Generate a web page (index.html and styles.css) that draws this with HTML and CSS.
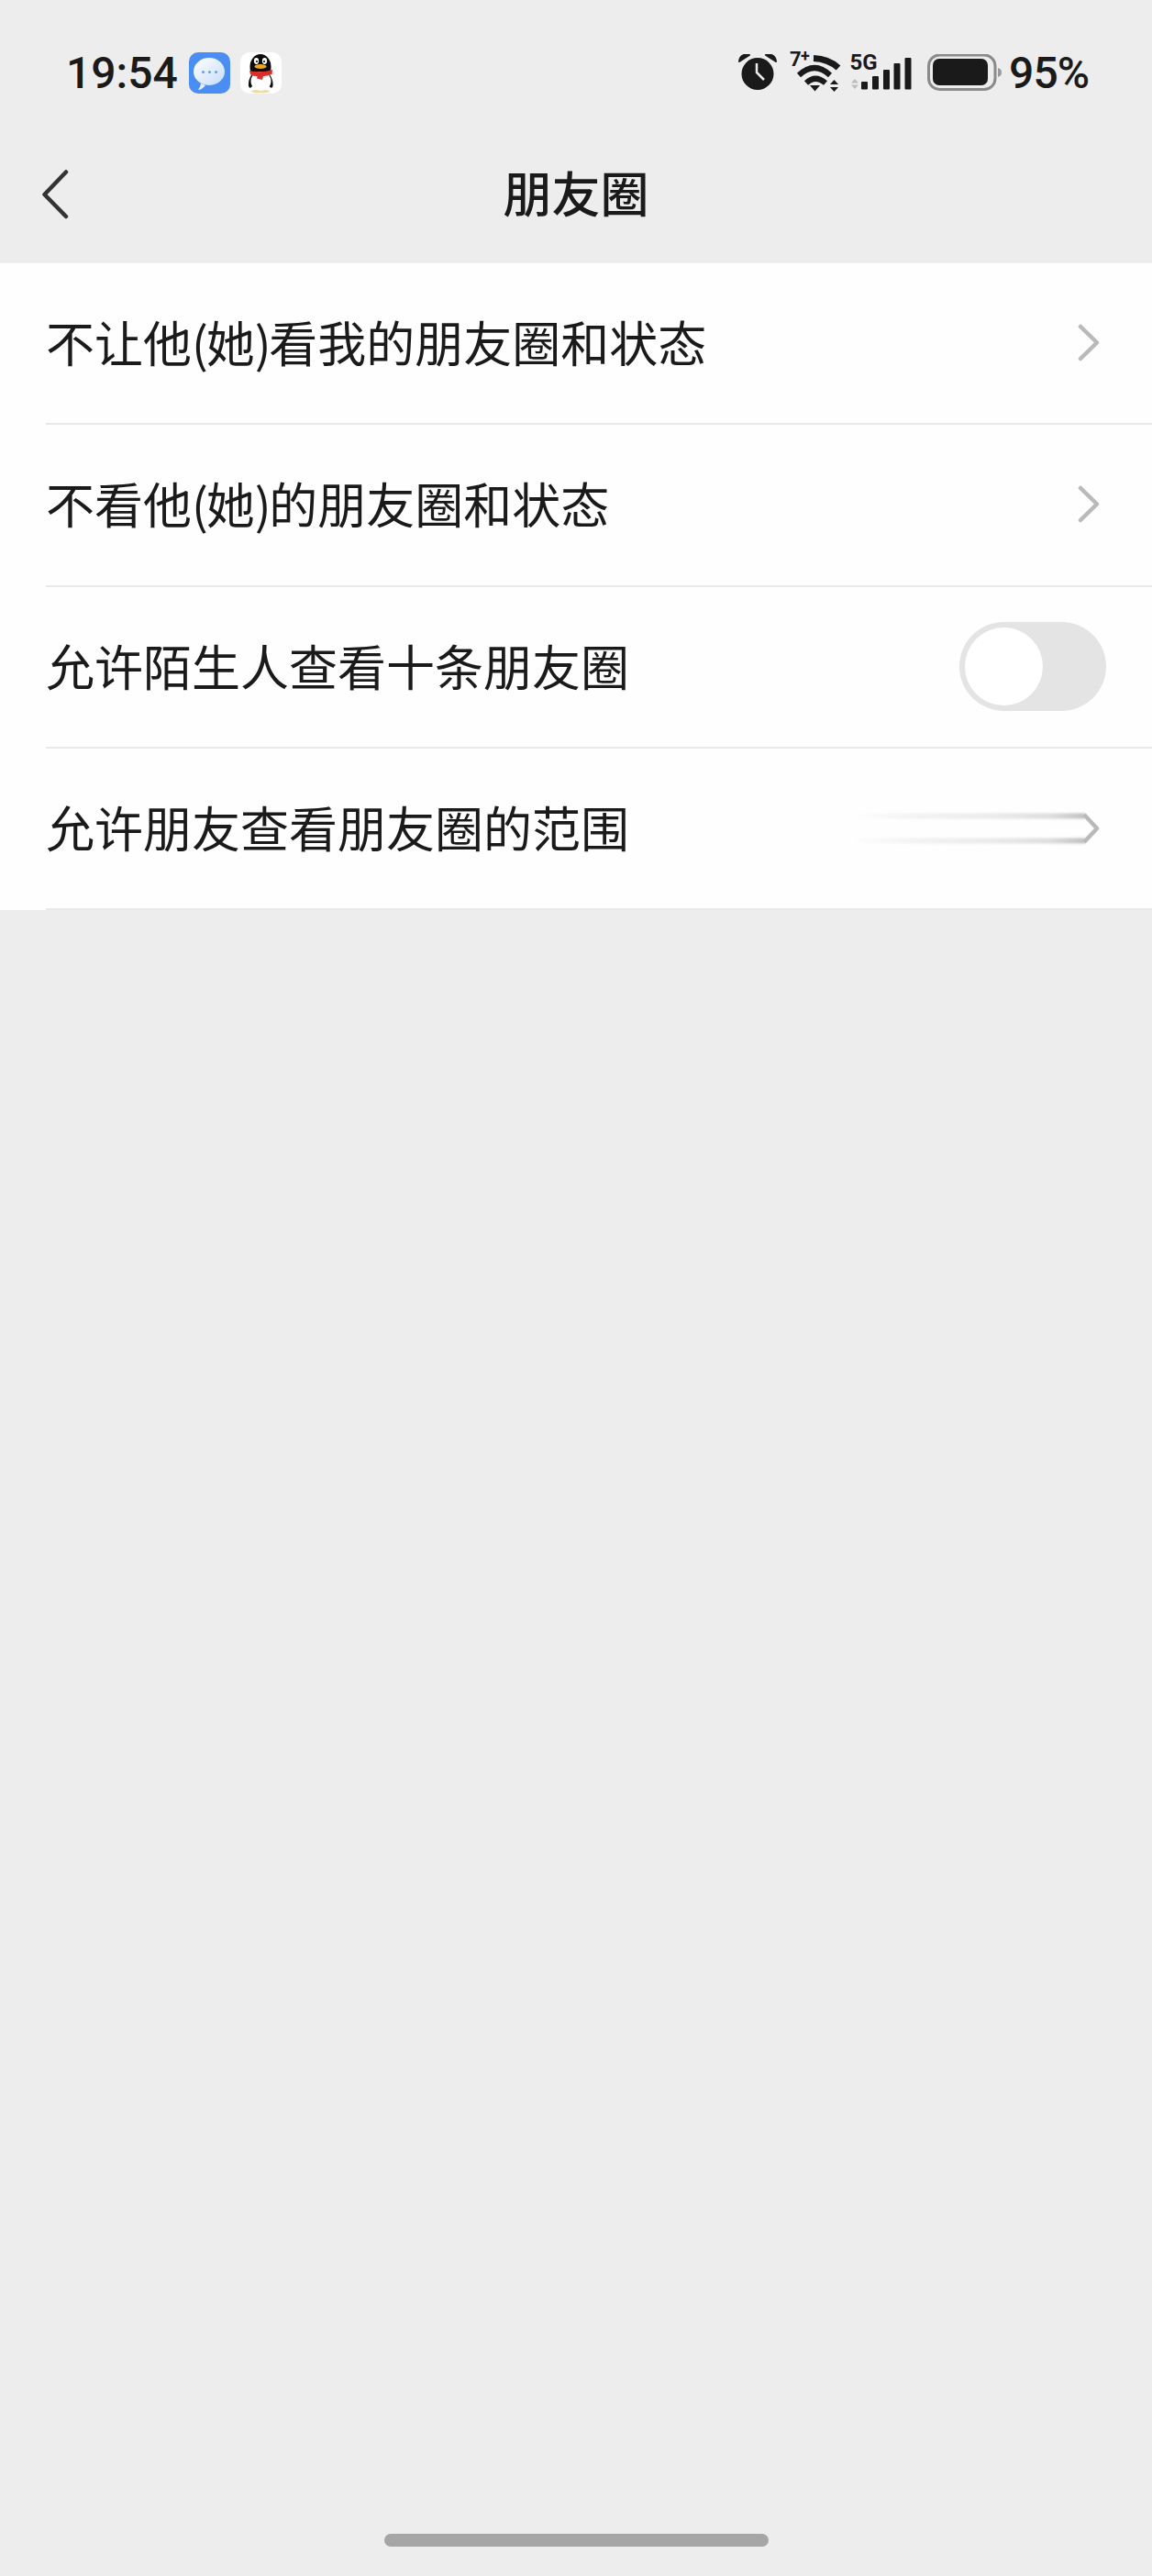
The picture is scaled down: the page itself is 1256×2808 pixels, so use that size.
FILE: index.html
```html
<!DOCTYPE html>
<html lang="zh-CN">
	<head>
		<title>朋友圈</title>
		<meta charset="utf-8">
		<link rel="stylesheet" href="styles.css">
	</head>
	<body>
		<div id="status">
			<div class="status-left">
				<span class="time">19:54</span>
				<svg class="app-icon" width="45" height="45" viewBox="206 57 45 45">
					<defs>
						<linearGradient id="bubble" x1="0" y1="0" x2="1" y2="1">
							<stop offset="0" stop-color="#ffffff"/>
							<stop offset="1" stop-color="#c6dcfa"/>
						</linearGradient>
					</defs>
					<rect x="206" y="57" width="45" height="45" rx="10" fill="#4b8ef3"/>
					<path d="M216 98 Q219 94 219 91 L224 93 Q220 98 216 98 Z" fill="#e6f0fd"/>
					<ellipse cx="228" cy="78" rx="17" ry="15" fill="url(#bubble)"/>
					<circle cx="221.5" cy="78.5" r="1.6" fill="#6fa1e8"/>
					<circle cx="228.5" cy="78.5" r="1.6" fill="#6fa1e8"/>
					<circle cx="235.5" cy="78.5" r="1.6" fill="#6fa1e8"/>
				</svg>
				<svg class="app-icon" width="45" height="45" viewBox="262 57 45 45">
					<rect x="262" y="57" width="45" height="45" rx="10" fill="#ffffff"/>
					<ellipse cx="284" cy="99.500" rx="10" ry="1.800" fill="#eed9a0"/>
					<ellipse cx="284" cy="73" rx="11.500" ry="14" fill="#0c0c0c"/>
					<ellipse cx="274.500" cy="88" rx="3" ry="8" fill="#0c0c0c" transform="rotate(16 274.500 88)"/>
					<ellipse cx="294" cy="88" rx="3" ry="8" fill="#0c0c0c" transform="rotate(-16 294 88)"/>
					<ellipse cx="284.500" cy="88.500" rx="11" ry="10.500" fill="#ffffff"/>
					<path d="M272 77 Q284 80 297 76 L296.500 81 Q291 83 287 83 L286 87 L280 85.500 L280.500 83 Q275 83 273 81 Z" fill="#dd2d2a"/>
					<ellipse cx="279.500" cy="66.500" rx="2.600" ry="3.400" fill="#ffffff"/>
					<ellipse cx="288.500" cy="66.500" rx="2.600" ry="3.400" fill="#ffffff"/>
					<circle cx="280" cy="67" r="1.100" fill="#0c0c0c"/>
					<circle cx="288" cy="67" r="1.100" fill="#0c0c0c"/>
					<ellipse cx="284" cy="72.500" rx="6.500" ry="2.400" fill="#eba921"/>
				</svg>
			</div>
			<div class="status-right">
				<svg width="42" height="42" viewBox="807 59 42 42">
					<circle cx="828" cy="80.5" r="17.5" fill="#1a1a1a"/>
					<path d="M808 67 Q809 58 819 60 Z" fill="#1a1a1a" stroke="#1a1a1a" stroke-width="2" stroke-linejoin="round"/>
					<path d="M848 67 Q847 58 837 60 Z" fill="#1a1a1a" stroke="#1a1a1a" stroke-width="2" stroke-linejoin="round"/>
					<path d="M827 69 V79 L835 87" fill="none" stroke="#ededed" stroke-width="2.5"/>
				</svg>
				<svg class="icon-wifi" width="60" height="60" viewBox="862 50 60 60">
					<text x="863" y="72" class="net-text">7</text>
					<text x="875" y="67" class="net-plus">+</text>
					<g fill="none" stroke="#1a1a1a">
						<path d="M889 63.500 Q905 64 916 74" stroke-width="7"/>
						<path d="M873 82 Q890 66 907 82" stroke-width="6"/>
						<path d="M881 90.500 Q891 81 902 90.500" stroke-width="6"/>
					</g>
					<polygon points="885,93 896,93 890.5,99.5" fill="#1a1a1a"/>
					<polygon points="911.5,87 907,92 916,92" fill="#1a1a1a"/>
					<polygon points="907,95 916,95 911.5,100" fill="#1a1a1a"/>
				</svg>
				<svg class="icon-signal" width="68" height="60" viewBox="929 50 68 60">
					<text x="928.500" y="75.500" class="net-text net-5g">5G</text>
					<polygon points="934,86 930,90.5 938,90.5" fill="#bdbdbd"/>
					<polygon points="930,92.5 938,92.5 934,97" fill="#bdbdbd"/>
					<rect x="941" y="89" width="7" height="8.5" rx="1" fill="#1a1a1a"/>
					<rect x="953" y="83" width="7" height="14.5" rx="1" fill="#1a1a1a"/>
					<rect x="965" y="76" width="7" height="21.5" rx="1" fill="#1a1a1a"/>
					<rect x="976.5" y="69" width="7" height="28.5" rx="1" fill="#1a1a1a"/>
					<rect x="988.5" y="63" width="7" height="34.5" rx="1" fill="#1a1a1a"/>
				</svg>
				<svg class="icon-battery" width="82" height="42" viewBox="1013 59 82 42">
					<rect x="1014.5" y="60" width="72.5" height="37.5" rx="12" fill="none" stroke="#8a8a8a" stroke-width="3"/>
					<rect x="1019" y="64" width="60" height="29" rx="7" fill="#1a1a1a"/>
					<path d="M1090 74 Q1094 75 1094 79 Q1094 83 1090 84 Z" fill="#9a9a9a"/>
				</svg>
				<span class="battery-pct">95%</span>
			</div>
		</div>
		<div id="nav">
			<svg class="back" width="30" height="54" viewBox="45 185 30 54">
				<path d="M72 187.500 L48.500 212 L72 236" fill="none" stroke="#333333" stroke-width="4.500" stroke-linecap="round" stroke-linejoin="round"/>
			</svg>
			<h1>朋友圈</h1>
		</div>
		<ul id="list">
			<li class="row">
				<span class="label">不让他<span class="paren">(</span>她<span class="paren">)</span>看我的朋友圈和状态</span>
				<svg class="chevron" width="24" height="42" viewBox="0 0 24 42"><path d="M3 3 L21 20.500 L3 38" fill="none" stroke="#b9b9b9" stroke-width="4.500" stroke-linecap="round" stroke-linejoin="round"/></svg>
			</li>
			<li class="row">
				<span class="label">不看他<span class="paren">(</span>她<span class="paren">)</span>的朋友圈和状态</span>
				<svg class="chevron" width="24" height="42" viewBox="0 0 24 42"><path d="M3 3 L21 20.500 L3 38" fill="none" stroke="#b9b9b9" stroke-width="4.500" stroke-linecap="round" stroke-linejoin="round"/></svg>
			</li>
			<li class="row">
				<span class="label">允许陌生人查看十条朋友圈</span>
				<div class="toggle"><div class="knob"></div></div>
			</li>
			<li class="row">
				<span class="label">允许朋友查看朋友圈的范围</span>
				<svg class="chevron-smear" width="272" height="44" viewBox="0 -4 272 44">
					<defs>
						<linearGradient id="smear">
							<stop offset="0" stop-color="#dcdcdc" stop-opacity="0"/>
							<stop offset="0.55" stop-color="#e4e4e4" stop-opacity="0.7"/>
							<stop offset="0.85" stop-color="#dedede"/>
							<stop offset="1" stop-color="#c0c0c0"/>
						</linearGradient>
					</defs>
					<g class="smear-lines">
						<rect x="2" y="1.500" width="254" height="6" fill="url(#smear)"/>
						<rect x="2" y="28.500" width="254" height="6" fill="url(#smear)"/>
					</g>
					<path d="M255 3 L269 18 L255 33" fill="none" stroke="#b9b9b9" stroke-width="4.500" stroke-linejoin="round"/>
				</svg>
			</li>
		</ul>
		<div id="home-bar"></div>
	</body>
</html>
```

FILE: styles.css
```css
html {
	height: 100%;
}
body {
	margin: 0;
	height: 2808px;
	display: flex;
	flex-direction: column;
	overflow: hidden;
	background-color: #EDEDED;
	color: #1A1A1A;
	font-family: "Noto Sans CJK SC", "Noto Sans", sans-serif;
}
svg {
	display: block;
	flex: 0 0 auto;
}

#status {
	flex: 0 0 160px;
	display: flex;
	align-items: center;
	justify-content: space-between;
	padding: 0 69px 0 72px;
	font-family: Roboto, sans-serif;
	font-weight: 500;
	font-size: 48px;
}
.status-left, .status-right {
	display: flex;
	align-items: center;
}
.time {
	width: 134px;
	line-height: 56px;
}
.status-left .app-icon + .app-icon {
	margin-left: 11px;
}
.app-icon {
	margin-top: -1px;
}
.icon-wifi {
	margin-left: 13px;
}
.icon-signal {
	margin-left: 7px;
}
.icon-battery {
	margin-left: 16px;
}
.battery-pct {
	margin-left: 7px;
	letter-spacing: -1px;
	line-height: 56px;
}
.net-text {
	font-family: Roboto, sans-serif;
	font-weight: 700;
	font-size: 22px;
	fill: #1A1A1A;
}
.net-5g {
	font-size: 24px;
}
.net-plus {
	font-family: Roboto, sans-serif;
	font-weight: 700;
	font-size: 18px;
	fill: #1A1A1A;
}

#nav {
	flex: 0 0 127px;
	box-sizing: border-box;
	display: grid;
	grid-template-columns: 1fr auto 1fr;
	align-items: center;
	padding-bottom: 23px;
}
#nav .back {
	margin-left: 45px;
}
#nav h1 {
	grid-column: 2;
	margin: 0 0 6px;
	font-size: 53px;
	font-weight: 500;
	line-height: 70px;
}

#list {
	list-style: none;
	margin: 0;
	padding: 0 0 0 50px;
	background-color: #FEFEFE;
}
.row {
	box-sizing: border-box;
	height: 176.300px;
	display: flex;
	align-items: center;
	justify-content: space-between;
	padding-right: 57px;
	border-bottom: 2px solid #E8E8E8;
	font-size: 53px;
}
.label {
	padding-bottom: 4px;
}
.paren {
	letter-spacing: -2.300px;
}
.smear-lines {
	filter: blur(1.200px);
}
.toggle {
	box-sizing: border-box;
	width: 160px;
	height: 97px;
	margin-right: -7px;
	padding: 6px;
	border-radius: 49px;
	background-color: #E4E4E4;
}
.knob {
	width: 85px;
	height: 85px;
	border-radius: 50%;
	background-color: #FFFFFF;
}

#home-bar {
	width: 419px;
	height: 14px;
	margin: auto auto 32px;
	border-radius: 7px;
	background-color: #A6A6A6;
}
```
